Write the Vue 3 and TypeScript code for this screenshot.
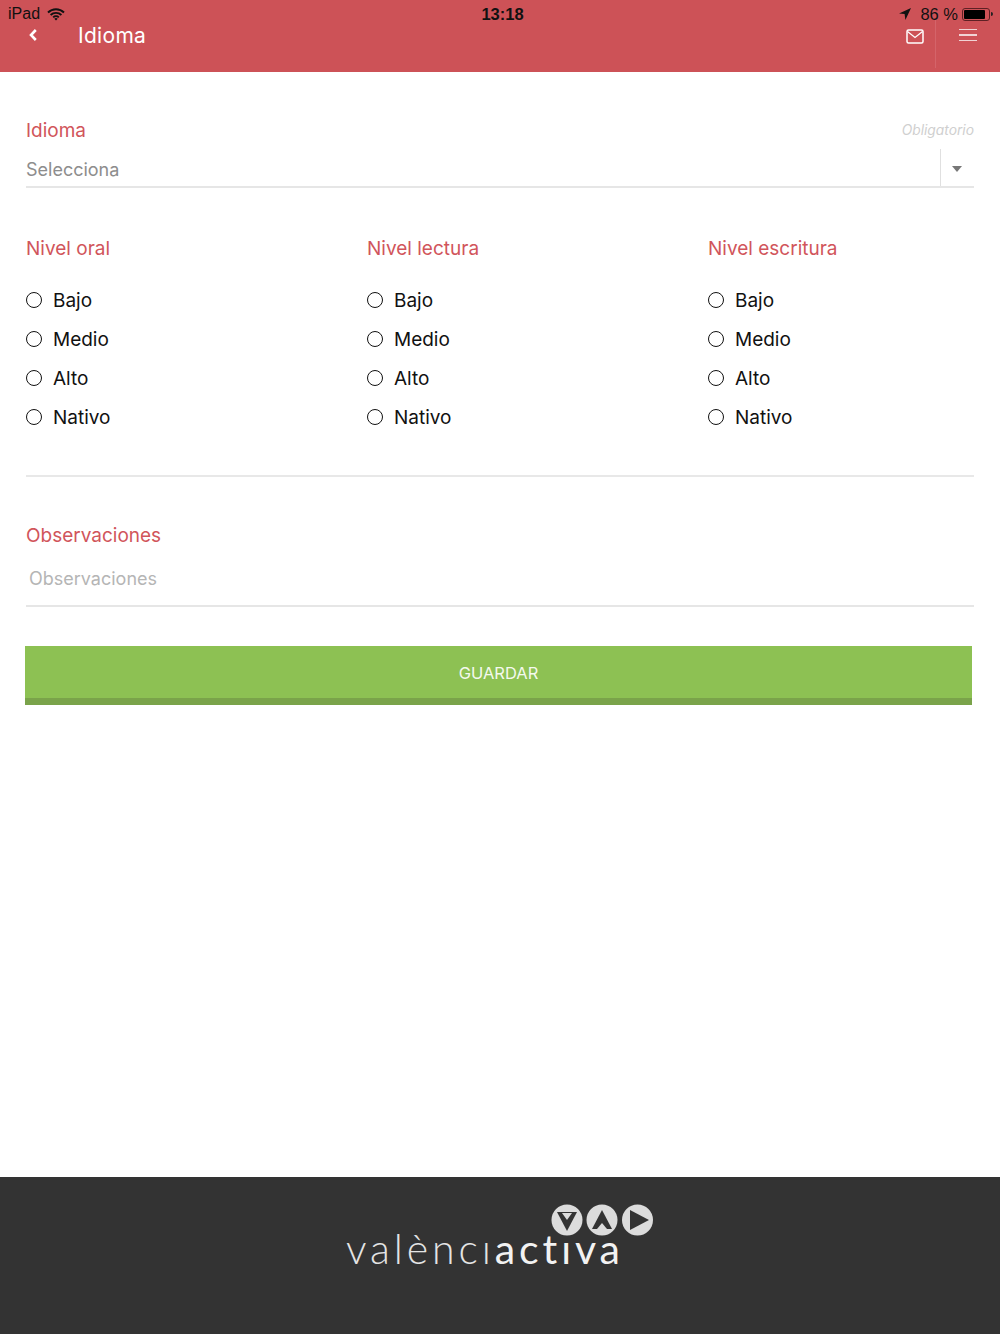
<script setup lang="ts">
const groups = ['Nivel oral', 'Nivel lectura', 'Nivel escritura'];
const levels = ['Bajo', 'Medio', 'Alto', 'Nativo'];
</script>

<template>
  <div class="page">
    <header class="header">
      <div class="status">
        <div class="status-left">
          <span>iPad</span>
          <svg width="18" height="14" viewBox="0 0 18 14">
            <path d="M1 5.5a11.5 11.5 0 0 1 16 0M3.6 8a7.8 7.8 0 0 1 10.8 0M6.2 10.4a4 4 0 0 1 5.6 0" fill="none" stroke="#111" stroke-width="1.9" />
            <path d="M9 13.6l-1.7-1.8a2.4 2.4 0 0 1 3.4 0z" fill="#111" />
          </svg>
        </div>
        <div class="clock">13:18</div>
        <div class="status-right">
          <svg width="14" height="14" viewBox="0 0 14 14"><path d="M13 1L1 6.4l5.6.7L7.4 13z" fill="#111" /></svg>
          <span>86 %</span>
          <div class="battery"><div class="battery-fill"></div></div>
          <div class="battery-cap"></div>
        </div>
      </div>
      <div class="nav">
        <svg class="back" width="10" height="14" viewBox="0 0 10 14">
          <path d="M7.8 2L3 7l4.8 5" fill="none" stroke="#fff" stroke-width="2.6" />
        </svg>
        <div class="title">Idioma</div>
        <div class="mail">
          <svg width="18" height="15" viewBox="0 0 18 15">
            <rect x="1" y="1" width="16" height="13" rx="1.5" fill="none" stroke="#fff" stroke-width="1.5" />
            <path d="M1.5 2.5L9 8.5l7.5-6" fill="none" stroke="#fff" stroke-width="1.3" />
          </svg>
        </div>
        <div class="menu">
          <span></span><span></span><span></span>
        </div>
      </div>
    </header>

    <main class="content">
      <div class="field-head">
        <label class="label">Idioma</label>
        <span class="required">Obligatorio</span>
      </div>
      <div class="select">
        <span class="select-text">Selecciona</span>
        <div class="select-arrow"><i></i></div>
      </div>

      <div class="levels">
        <div v-for="g in groups" :key="g" class="level-col">
          <div class="label">{{ g }}</div>
          <div class="radios">
            <div v-for="l in levels" :key="l" class="radio">
              <span class="dot"></span>
              <span>{{ l }}</span>
            </div>
          </div>
        </div>
      </div>

      <div class="divider"></div>

      <div class="label obs-label">Observaciones</div>
      <div class="obs-input">Observaciones</div>

      <button class="save">GUARDAR</button>
    </main>

    <footer class="footer">
      <div class="logo">
        <svg class="logo-icons" width="104" height="32" viewBox="0 0 104 32">
          <circle cx="16" cy="16" r="15.5" fill="#dcdcdc" />
          <path d="M6 8h20L16 27z" fill="#333" />
          <path d="M11 9h10l-5 7z" fill="#dcdcdc" />
          <circle cx="51" cy="16" r="15.5" fill="#dcdcdc" />
          <path d="M41 25L51 6l10 19z" fill="#333" />
          <path d="M46 25l5-6 5 6z" fill="#dcdcdc" />
          <circle cx="86.5" cy="16" r="15.5" fill="#dcdcdc" />
          <path d="M79 6l19 10-19 10z" fill="#333" />
        </svg>
        <div class="logo-text">valènc<span class="dotless">ı</span><b>actıva</b></div>
      </div>
    </footer>
  </div>
</template>

<style>
body {
  background: #fff;
}
</style>

<style scoped>
.page {
  width: 1000px;
  height: 1334px;
  display: flex;
  flex-direction: column;
  font-family: Inter, "Liberation Sans", sans-serif;
  overflow: hidden;
}

.header {
  height: 72px;
  background: #cd5257;
  box-sizing: border-box;
  padding: 4px 0 0;
  flex: none;
}

.status {
  height: 20px;
  display: grid;
  grid-template-columns: 1fr auto 1fr;
  align-items: center;
  padding: 0 7px 0 8px;
  font-family: "Liberation Sans", sans-serif;
  font-size: 16px;
  color: #111;
}

.status-left {
  display: flex;
  align-items: center;
  gap: 7px;
}

.clock {
  font-weight: bold;
  font-size: 16.5px;
  margin-left: 4px;
}

.status-right {
  display: flex;
  align-items: center;
  justify-content: flex-end;
}

.status-right span {
  margin: 0 4px 0 8px;
  font-size: 16.5px;
}

.battery {
  width: 28px;
  height: 13px;
  box-sizing: border-box;
  border: 1px solid #5e2024;
  border-radius: 3px;
  padding: 1px;
}

.battery-fill {
  width: 86%;
  height: 100%;
  background: #000;
  border-radius: 1px;
}

.battery-cap {
  width: 2px;
  height: 4px;
  margin-left: 1px;
  background: #222;
  border-radius: 0 2px 2px 0;
}

.nav {
  display: flex;
  align-items: center;
  height: 30px;
  margin-top: -4px;
  color: #fff;
}

.back {
  margin-left: 28px;
}

.title {
  margin-left: 40px;
  font-size: 21px;
  letter-spacing: 0.3px;
  flex: 1;
}

.mail {
  width: 42px;
  height: 48px;
  margin-bottom: -18px;
  padding-top: 9px;
  box-sizing: border-box;
  display: flex;
  justify-content: center;
  align-items: flex-start;
  border-right: 1px solid #d4646a;
}

.menu {
  width: 64px;
  box-sizing: border-box;
  padding: 0 23px;
  display: flex;
  flex-direction: column;
  gap: 4px;
}

.menu span {
  height: 1.5px;
  background: #f1d3d4;
}

.content {
  flex: 1;
  padding: 48px 26px 0;
  box-sizing: border-box;
}

.field-head {
  display: flex;
  justify-content: space-between;
  align-items: center;
  height: 22px;
}

.label {
  color: #d1555b;
  font-size: 19px;
  line-height: 22px;
}

.required {
  font-size: 13.8px;
  font-style: italic;
  color: #cfcfcf;
  margin-bottom: 3px;
}

.select {
  height: 37px;
  margin-top: 7px;
  display: flex;
  justify-content: space-between;
  align-items: center;
  border-bottom: 2px solid #e6e6e6;
  color: #8d8d8d;
  font-size: 18px;
}

.select-text {
  padding-top: 3px;
}

.select-arrow {
  width: 34px;
  height: 100%;
  padding: 3px 2px 0 0;
  box-sizing: border-box;
  border-left: 1px solid #e0e0e0;
  display: flex;
  align-items: center;
  justify-content: center;
}

.select-arrow i {
  border-left: 5px solid transparent;
  border-right: 5px solid transparent;
  border-top: 6px solid #777;
}

.levels {
  display: grid;
  grid-template-columns: 341px 341px 1fr;
  margin-top: 50px;
}

.radios {
  margin-top: 21px;
}

.radio {
  display: flex;
  align-items: center;
  height: 39px;
  gap: 11px;
  font-size: 19px;
  color: #111;
}

.dot {
  width: 16px;
  height: 16px;
  margin-bottom: 2px;
  border: 1.8px solid #111;
  border-radius: 50%;
  box-sizing: border-box;
}

.divider {
  height: 2px;
  background: #e8e8e8;
  margin-top: 38px;
}

.obs-label {
  margin-top: 48px;
}

.obs-input {
  height: 55px;
  margin-top: 5px;
  padding-left: 3px;
  box-sizing: border-box;
  display: flex;
  align-items: center;
  border-bottom: 2px solid #e6e6e6;
  color: #b5b5b5;
  font-size: 18px;
}

.save {
  display: block;
  width: 947px;
  height: 59px;
  margin: 39px 0 0 -1px;
  padding: 1px 0 0;
  border: 0;
  border-bottom: 7px solid #7aa34a;
  background: #8dc153;
  color: #f4f9ee;
  font-family: inherit;
  font-size: 16.5px;
}

.footer {
  height: 157px;
  flex: none;
  background: #333;
}

.logo {
  position: relative;
  width: 310px;
  height: 100%;
  margin-left: 346px;
}

.logo-icons {
  position: absolute;
  left: 205px;
  top: 27px;
}

.logo-text {
  position: absolute;
  left: 0;
  top: 50px;
  font-family: Lato, sans-serif;
  font-weight: 300;
  font-size: 41px;
  line-height: 44px;
  letter-spacing: 3.9px;
  color: #e4e4e4;
  white-space: nowrap;
}

.logo-text b {
  font-weight: 400;
  color: #f2f2f2;
}
</style>
